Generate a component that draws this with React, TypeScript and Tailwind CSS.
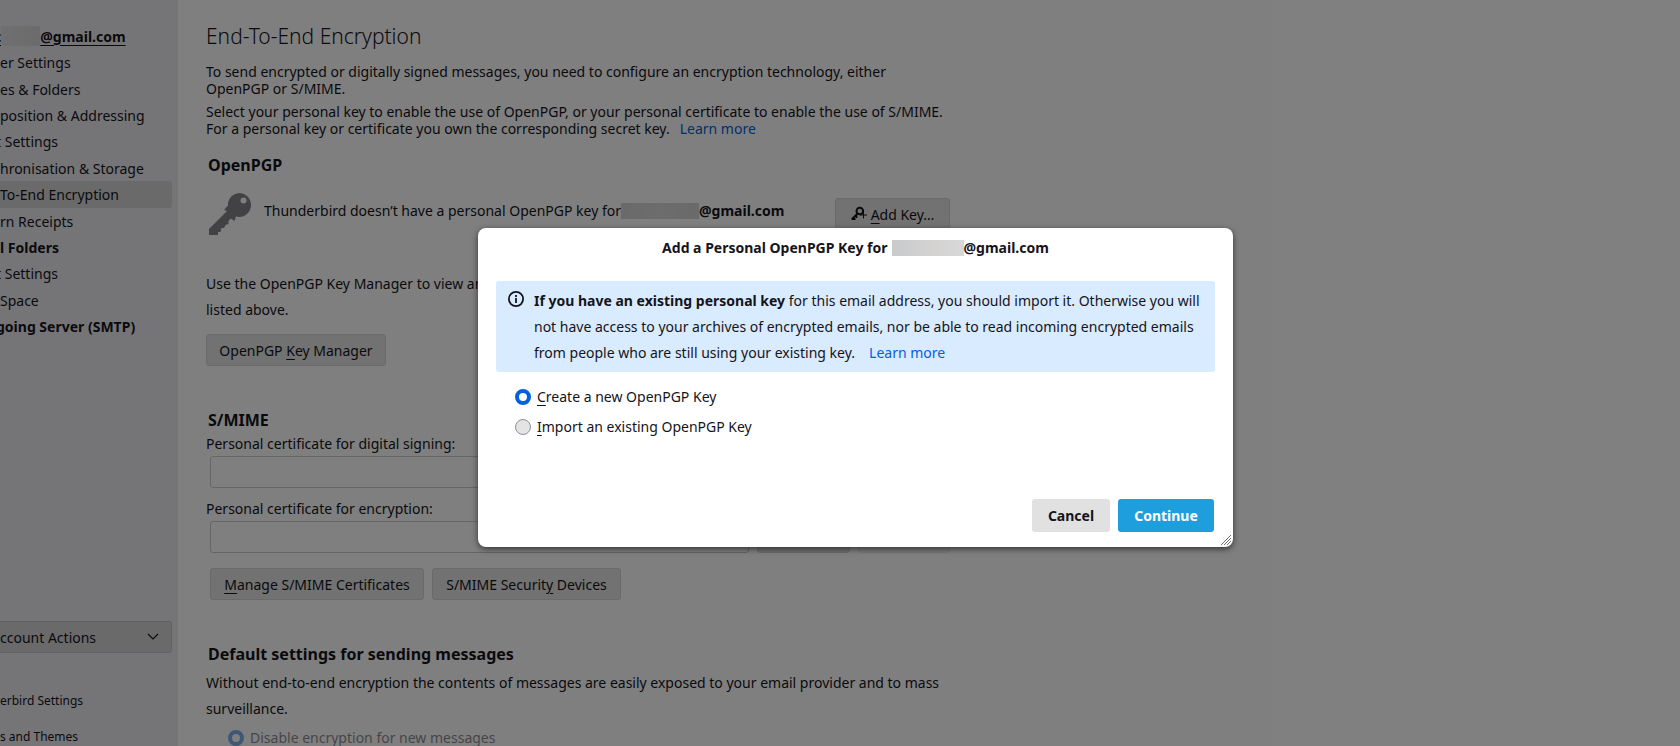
import type { ReactNode } from "react";

type SideItem = { text: string; bold?: boolean; selected?: boolean; clipped?: boolean };

const sideItems: SideItem[] = [
  { text: "er Settings" },
  { text: "es & Folders" },
  { text: "position & Addressing" },
  { text: "t Settings", clipped: true },
  { text: "hronisation & Storage" },
  { text: "To-End Encryption", selected: true },
  { text: "rn Receipts" },
  { text: "l Folders", bold: true },
  { text: "t Settings", clipped: true },
  { text: "Space" },
  { text: "going Server (SMTP)", bold: true, clipped: true },
];

function Key({ children }: { children: ReactNode }) {
  return <span className="underline underline-offset-3">{children}</span>;
}

function GreyButton({ children, className = "" }: { children?: ReactNode; className?: string }) {
  return (
    <button
      type="button"
      className={`flex h-8 items-center justify-center rounded-[3px] border border-[#d4d4d4] bg-[#e4e4e4] whitespace-nowrap ${className}`}
    >
      {children}
    </button>
  );
}

function KeyIcon() {
  return (
    <svg className="h-[42px] w-[42px] shrink-0" viewBox="0 0 42 42" aria-hidden="true">
      <path
        fill="#85858a"
        fillRule="evenodd"
        d="M30 0a12 12 0 0 1 12 12 12 12 0 0 1-12 12c-1 0-2-.1-3-.4L25.500 28 22 25.500l-2.500 2.500v3l-3 1-1.500 3h-2.500l-1 4H9v3H0v-6l18-18-3-1 4-4.500V10A12 12 0 0 1 30 0Zm4.500 4.500a3 3 0 1 0 0 6 3 3 0 0 0 0-6Z"
      />
    </svg>
  );
}

function AddKeyIcon() {
  return (
    <svg className="h-4 w-4" viewBox="0 0 16 16" fill="none" stroke="#15141a" aria-hidden="true">
      <circle cx="8.800" cy="5" r="3.300" strokeWidth="2" />
      <path d="M6.500 7.500 1 13M.5 13h4M5.500 9v3" strokeWidth="1.800" />
      <path d="M12.500 5.500v7M9 9h7" strokeWidth="1" />
    </svg>
  );
}

function Sidebar() {
  return (
    <aside className="flex w-[178px] shrink-0 flex-col overflow-hidden bg-[#ebebf0] pr-1.5 whitespace-nowrap">
      <ul className="mt-[23px] grid h-[317px] grid-rows-12">
        <li className="flex items-center font-bold">
          <span className="-ml-1.5 underline underline-offset-3">c</span>
          <span className="h-5 w-[39px] bg-gradient-to-r from-[#e0e0e4] to-[#d8d8d8]" />
          <a href="#account" className="underline underline-offset-3">@gmail.com</a>
        </li>
        {sideItems.map((item, i) => (
          <li
            key={i}
            className={`flex items-center ${item.bold ? "font-bold" : ""} ${item.selected ? "rounded-r-[3px] bg-[#d4d4d4]" : ""}`}
          >
            <a href="#section" className={item.clipped ? "-ml-1" : ""}>{item.text}</a>
          </li>
        ))}
      </ul>
      <button
        type="button"
        className="mt-[281px] flex h-8 shrink-0 items-center justify-between rounded-r-[3px] border border-l-0 border-[#c4c4c8] bg-[#d4d4d6] pr-3"
      >
        ccount Actions
        <svg className="h-3 w-3" viewBox="0 0 12 12" fill="none" stroke="#15141a" strokeWidth="1.200" aria-hidden="true">
          <path d="m1 3 5 5 5-5" />
        </svg>
      </button>
      <a href="#settings" className="mt-[39px] text-[12px] leading-[18px]">erbird Settings</a>
      <a href="#addons" className="mt-[18px] text-[12px] leading-[18px]">s and Themes</a>
    </aside>
  );
}

function Settings() {
  return (
    <main className="w-[774px] shrink-0 pl-7">
      <h1 className="mt-[22px] text-[21px] leading-7 font-light">End-To-End Encryption</h1>
      <p className="mt-[13px] leading-[17px]">
        To send encrypted or digitally signed messages, you need to configure an encryption technology, either
        <br />
        OpenPGP or S/MIME.
      </p>
      <p className="mt-1.5 leading-[17px] whitespace-nowrap">
        Select your personal key to enable the use of OpenPGP, or your personal certificate to enable the use of S/MIME.
        <br />
        For a personal key or certificate you own the corresponding secret key.
        <a href="#learn" className="ml-2.5 text-[#0060df]">Learn more</a>
      </p>

      <h2 className="mt-4 pl-0.5 text-[16px] leading-6 font-bold">OpenPGP</h2>
      <div className="mt-4 flex h-[42px] items-start pr-0.5 pl-[3px]">
        <KeyIcon />
        <p className="mt-2 ml-[13px] flex items-center leading-5 whitespace-nowrap">
          Thunderbird doesn’t have a personal OpenPGP key for
          <span className="h-4 w-[78px] bg-gradient-to-r from-[#d4d4d4] via-[#dadada] to-[#d4d4d4]" />
          <b>@gmail.com</b>
        </p>
        <GreyButton className="mt-[5px] ml-auto w-[115px] gap-1">
          <AddKeyIcon />
          <span><Key>A</Key>dd Key…</span>
        </GreyButton>
      </div>
      <p className="mt-9 leading-[26px]">
        Use the OpenPGP Key Manager to view and manage public keys of your correspondents and all keys not
        <br />
        listed above.
      </p>
      <GreyButton className="mt-[11px] w-[180px]"><span>OpenPGP <Key>K</Key>ey Manager</span></GreyButton>

      <h2 className="mt-[42px] pl-0.5 text-[16px] leading-6 font-bold">S/MIME</h2>
      <label htmlFor="signing" className="mt-0.5 block leading-5">Personal certificate for digital signing:</label>
      <div className="mt-0.5 flex gap-2 pr-0.5 pl-1">
        <input id="signing" readOnly className="h-8 min-w-0 flex-1 rounded-[3px] border border-[#cccccc] bg-white px-2" />
        <GreyButton className="w-[93px]">Select…</GreyButton>
        <GreyButton className="w-[92px] opacity-40">Clear</GreyButton>
      </div>
      <label htmlFor="encryption" className="mt-[11px] block leading-5">Personal certificate for encryption:</label>
      <div className="mt-0.5 flex gap-2 pr-0.5 pl-1">
        <input id="encryption" readOnly className="h-8 min-w-0 flex-1 rounded-[3px] border border-[#cccccc] bg-white px-2" />
        <GreyButton className="w-[93px]">Select…</GreyButton>
        <GreyButton className="w-[92px] opacity-40">Clear</GreyButton>
      </div>
      <div className="mt-[15px] flex gap-2 pl-1">
        <GreyButton className="w-[214px]"><span><Key>M</Key>anage S/MIME Certificates</span></GreyButton>
        <GreyButton className="w-[189px]"><span>S/MIME Securit<Key>y</Key> Devices</span></GreyButton>
      </div>

      <h2 className="mt-[42px] pl-0.5 text-[16px] leading-6 font-bold">Default settings for sending messages</h2>
      <p className="mt-1 leading-[26px]">
        Without end-to-end encryption the contents of messages are easily exposed to your email provider and to mass
        <br />
        surveillance.
      </p>
      <label className="mt-1 flex items-center gap-1.5 pl-[22px] leading-6 opacity-50">
        <input type="radio" name="default" defaultChecked disabled className="h-4 w-4 appearance-none rounded-full border-[4px] border-[#0060df] bg-white" />
        <span><Key>D</Key>isable encryption for new messages</span>
      </label>
    </main>
  );
}

function KeyDialog() {
  return (
    <div
      role="dialog"
      aria-labelledby="dialog-title"
      className="relative flex h-[319px] w-[755px] flex-col rounded-lg bg-white px-[18px] shadow-[0_2px_6px_rgba(0,0,0,0.6)]"
    >
      <h2 id="dialog-title" className="mt-2.5 flex items-center justify-center leading-5 font-bold whitespace-nowrap">
        Add a Personal OpenPGP Key for
        <span className="ml-1 h-4 w-[72px] bg-gradient-to-r from-[#c8cacc] via-[#d3d2d1] to-[#d8d8d8]" />
        @gmail.com
      </h2>
      <div className="mt-[23px] flex items-start rounded-[3px] bg-[#d9ebff] pt-[7px] pb-1.5 pl-3">
        <svg className="mt-[3px] h-4 w-4 shrink-0" viewBox="0 0 16 16" fill="none" stroke="#15141a" aria-hidden="true">
          <circle cx="8" cy="8" r="7.100" strokeWidth="1.800" />
          <path d="M8 7v5M8 4v2" strokeWidth="1.800" />
        </svg>
        <p className="ml-2.5 leading-[26px] whitespace-nowrap">
          <b>If you have an existing personal key</b> for this email address, you should import it. Otherwise you will
          <br />
          not have access to your archives of encrypted emails, nor be able to read incoming encrypted emails
          <br />
          from people who are still using your existing key.
          <a href="#import" className="ml-3.5 text-[#0060df]">Learn more</a>
        </p>
      </div>
      <div className="mt-[13px] flex flex-col gap-1.5 pl-[19px]">
        <label className="flex items-center gap-1.5 leading-6">
          <input type="radio" name="key" defaultChecked className="h-4 w-4 appearance-none rounded-full border-[4px] border-[#0060df] bg-white" />
          <span><Key>C</Key>reate a new OpenPGP Key</span>
        </label>
        <label className="flex items-center gap-1.5 leading-6">
          <input type="radio" name="key" className="h-4 w-4 appearance-none rounded-full border border-[#8f8f9d] bg-[#e4e4e4]" />
          <span><Key>I</Key>mport an existing OpenPGP Key</span>
        </label>
      </div>
      <div className="mt-auto mb-[15px] flex justify-end gap-2 pr-px font-bold">
        <button type="button" className="h-[33px] w-[78px] rounded-[3px] bg-[#e1e1e1]">Cancel</button>
        <button type="button" className="h-[33px] w-24 rounded-[3px] bg-[#1f9ede] text-white">Continue</button>
      </div>
      <svg className="absolute right-0.5 bottom-0.5 h-2.5 w-2.5" viewBox="0 0 10 10" stroke="#707070" strokeWidth="1" aria-hidden="true">
        <path d="M0 10 10 0M3 10l7-7M6 10l4-4" />
      </svg>
    </div>
  );
}

export default function App() {
  return (
    <div className="relative h-screen overflow-hidden bg-white font-['Noto_Sans',sans-serif] text-[14px] text-[#15141a]">
      <div className="flex h-full overflow-hidden">
        <Sidebar />
        <Settings />
      </div>
      <div className="absolute inset-0 flex items-start justify-center bg-black/50 pt-[228px] pl-[31px]">
        <KeyDialog />
      </div>
    </div>
  );
}
